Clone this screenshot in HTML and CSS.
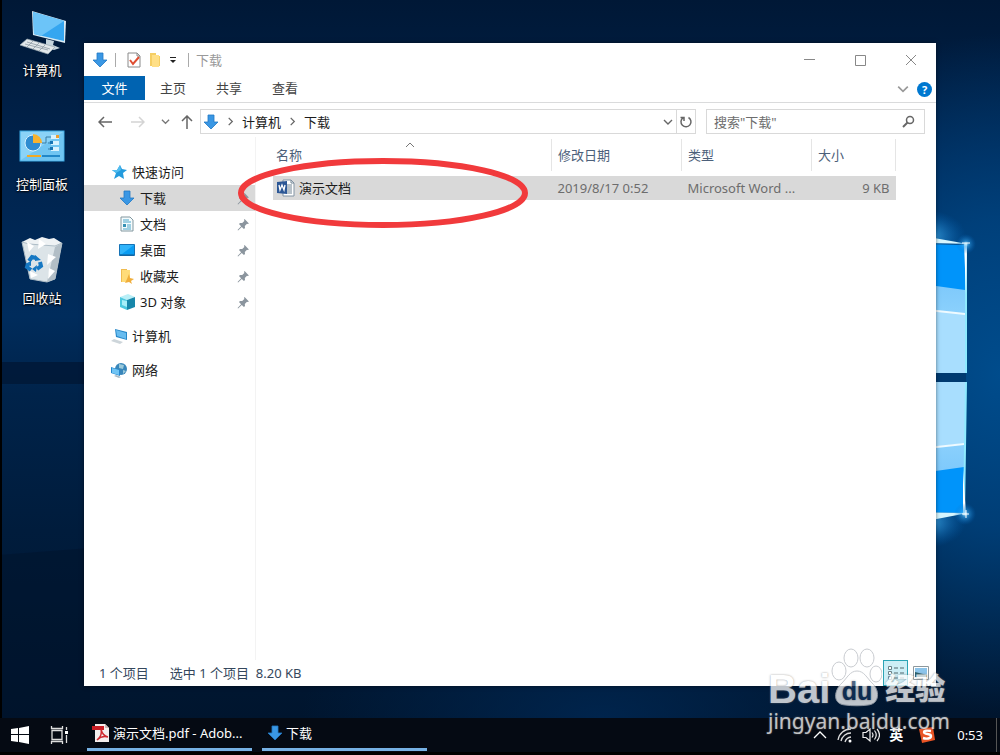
FILE: index.html
```html
<!DOCTYPE html>
<html lang="zh-CN">
<head>
    <meta charset="UTF-8">
    <meta name="viewport" content="width=device-width, initial-scale=1.0">
    <title>下载</title>
    <link rel="stylesheet" href="styles.css">
</head>
<body>
    <!-- Shared icons -->
    <svg class="sprite" aria-hidden="true">
        <symbol id="i-down" viewBox="0 0 16 16"><path d="M5 1h6v7h4l-7 7-7-7h4z" fill="#3a97e4" stroke="#2279c4" stroke-width=".8"/></symbol>
        <symbol id="i-pin" viewBox="0 0 12 12"><path d="M7 1l4 4-1 .6-.8-.3-2 2 .2 2-1 .9-2-2L1 11.500l-.5-.5 3.300-3.400L1.800 5.600l1-1 2 .1 2-2L6.500 1.700z" fill="#8b959e"/></symbol>
        <symbol id="i-chev" viewBox="0 0 10 10"><path d="M1 3l4 4 4-4" fill="none" stroke="currentColor" stroke-width="1.400"/></symbol>
        <symbol id="i-right" viewBox="0 0 10 10"><path d="M3 1l4 4-4 4" fill="none" stroke="currentColor" stroke-width="1.400"/></symbol>
    </svg>

    <main class="desktop">
        <svg class="wallpaper" viewBox="0 0 1000 755" preserveAspectRatio="xMaxYMin slice" aria-hidden="true">
            <defs>
                <radialGradient id="glow"><stop offset="0" stop-color="#c8f2ff"/><stop offset=".3" stop-color="#3aa8ee" stop-opacity=".6"/><stop offset="1" stop-color="#0067c0" stop-opacity="0"/></radialGradient>
                <linearGradient id="paneTop" x1="0" y1="0" x2="0" y2="1"><stop offset="0" stop-color="#7cc8fb"/><stop offset="1" stop-color="#a6e0ff"/></linearGradient>
                <linearGradient id="paneBottom" x1="0" y1="0" x2="0" y2="1"><stop offset="0" stop-color="#a6e0ff"/><stop offset="1" stop-color="#7cc8fb"/></linearGradient>
            </defs>
            <path d="M0 362h90v22H0z" fill="#001836" opacity=".8"/>
            <path d="M0 555l90-7v170H0z" fill="#001128" opacity=".4"/>
            <ellipse cx="926" cy="236" rx="40" ry="26" fill="url(#glow)"/>
            <ellipse cx="926" cy="522" rx="40" ry="26" fill="url(#glow)"/>
            <path d="M900 244l66 1v128h-66z" fill="#0094fa"/>
            <path d="M900 281l65 9v83h-65z" fill="url(#paneTop)"/>
            <path d="M900 306l65 8v59h-65z" fill="#a8defe"/>
            <path d="M900 307l65 7" stroke="#eefaff" stroke-width="2"/>
            <path d="M900 373h66v9h-66z" fill="#003a70"/>
            <path d="M900 382h66l-2 131-64-1z" fill="#0094fa"/>
            <path d="M900 382h66l-2 85-64 9z" fill="url(#paneBottom)"/>
            <path d="M900 382h65v61l-65 8z" fill="#a8defe"/>
            <path d="M900 451l64-7" stroke="#eefaff" stroke-width="2"/>
            <path d="M900 232l68 12-68-2z" fill="#d6f6ff"/>
            <path d="M900 512l68 1-68 13z" fill="#d6f6ff"/>
            <path d="M966 243v130M966 382l-2 132" fill="none" stroke="#8eeaff" stroke-width="2"/>
            <path d="M964 243l3 1-1 50zM963 470l3 44-3 1z" fill="#fff"/>
            <circle cx="966" cy="244" r="10" fill="url(#glow)"/>
            <circle cx="965" cy="514" r="11" fill="url(#glow)"/>
            <path d="M962 243h8M962 514h7M966 510v8" stroke="#fff"/>
        </svg>

        <nav class="shortcuts" aria-label="桌面">
            <a class="shortcut" href="#">
                <svg width="48" height="48" viewBox="0 0 48 48">
                    <path d="M14 2l34 10-1 22-32-8z" fill="#d9eaf3"/>
                    <path d="M15 3l31 9v20l-30-7z" fill="#35a6f0"/>
                    <path d="M15 3l31 9-23 15-7-2z" fill="#6cc4f8"/>
                    <path d="M28 30l8 2-1 4 7 3-6 2-13-4 5-2z" fill="#c6d5dd"/>
                    <path d="M9 30l28 8-7 7L2 36z" fill="#e3e8ea" stroke="#9ba9b2" stroke-width=".7"/>
                    <path d="M9 33l23 7M7 35l23 6M15 32l-6 6M21 34l-6 6M27 36l-6 6" stroke="#8e9ba3" stroke-width=".8"/>
                </svg>
                <span>计算机</span>
            </a>
            <a class="shortcut" href="#">
                <svg width="48" height="48" viewBox="0 0 48 48">
                    <rect x="2" y="8" width="44" height="30" fill="#8bd3f7" stroke="#38a7e2"/>
                    <path d="M3 37L45 9v28z" fill="#70c5f2"/>
                    <circle cx="15" cy="20" r="8" fill="#2e8bd0" stroke="#d8f2ff"/>
                    <path d="M15 20v-9a9 9 0 0 1 9 9z" fill="#f7b22d"/>
                    <path d="M24 20h4v-6h5M33 20h-3M33 26h-3" fill="none" stroke="#377ca5"/>
                    <path d="M33 12h8v4h-8zM33 18h8v4h-8zM33 24h8v4h-8z" fill="#d7f2ff"/>
                    <path d="M38 12h3v3h-3z" fill="#ee9e2f"/>
                    <path d="M32 18h3v3h-3zM32 24h3v3h-3z" fill="#1674b5"/>
                    <path d="M9 33h14" stroke="#f2aa25" stroke-width="2"/>
                    <path d="M24 33h18" stroke="#2187c8" stroke-width="2"/>
                </svg>
                <span>控制面板</span>
            </a>
            <a class="shortcut" href="#">
                <svg width="48" height="48" viewBox="0 0 48 48">
                    <path d="M4 5l8-4 5 2 7-3 7 2 5-1 8 5-7 6-27-2z" fill="#eef2f4"/>
                    <path d="M4 5l7 2 26 2 7-3-7 36-8 3-17-3z" fill="#dce4e8" stroke="#aebdc7"/>
                    <path d="M37 10l7-4-7 36-8 3z" fill="#b2bec6"/>
                    <path d="M9 5l7 4-5 6zM21 2l7 5-8 5zM30 17l8 3-9 8zM31 31l6 3-7 8zM12 34l8 4-7 3z" fill="#fff"/>
                    <g fill="none" stroke="#1678c3" stroke-width="4"><path d="M11 24l3-4 4 1M22 25l1 4-4 3M13 33l-4-3 1-3"/></g>
                    <path d="M17 18l6 5-6 1zM19 28l-1 7-4-3zM7 27l6-3v5z" fill="#1678c3"/>
                </svg>
                <span>回收站</span>
            </a>
        </nav>

        <section class="window">
            <header class="titlebar">
                <svg width="16" height="16"><use href="#i-down"/></svg>
                <i class="divider"></i>
                <button class="plain" aria-label="属性"><svg width="14" height="16" viewBox="0 0 14 16"><path d="M1 1h9l3 3v11H1z" fill="#fff" stroke="#8a8a8a"/><path d="M10 1v3h3" fill="none" stroke="#8a8a8a"/><path d="M3 8l3 4 6-7" fill="none" stroke="#df4d31" stroke-width="2"/></svg></button>
                <button class="plain" aria-label="新建文件夹"><svg width="12" height="14" viewBox="0 0 12 14"><path d="M1 0h6v3h4v10H1z" fill="#f5ce64"/><path d="M3 2h7v12H3z" fill="#ffdf86"/></svg></button>
                <button class="plain" aria-label="自定义"><svg width="8" height="8" viewBox="0 0 8 8"><path d="M1 1.500h6" stroke="#222"/><path d="M1 4h6L4 7z" fill="#222"/></svg></button>
                <i class="divider"></i>
                <span class="title">下载</span>
                <div class="controls">
                    <button class="plain" aria-label="最小化"><svg width="12" height="12"><path d="M1 5.500h11" stroke="#888"/></svg></button>
                    <button class="plain" aria-label="最大化"><svg width="12" height="12"><path d="M1.500 1.500h10v10h-10z" fill="none" stroke="#888"/></svg></button>
                    <button class="plain" aria-label="关闭"><svg width="12" height="12"><path d="M1 1l10 10M11 1L1 11" stroke="#888"/></svg></button>
                </div>
            </header>

            <div class="ribbon">
                <button class="tab active">文件</button>
                <button class="tab">主页</button>
                <button class="tab">共享</button>
                <button class="tab">查看</button>
                <button class="plain expand" aria-label="展开功能区"><svg width="12" height="12"><use href="#i-chev"/></svg></button>
                <button class="help" aria-label="帮助">?</button>
            </div>

            <div class="addressbar">
                <div class="history">
                    <button class="plain" aria-label="后退"><svg width="14" height="12" viewBox="0 0 14 12"><path d="M6 1L1 6l5 5M1 6h13" fill="none" stroke="#666" stroke-width="1.500"/></svg></button>
                    <button class="plain" aria-label="前进"><svg width="14" height="12" viewBox="0 0 14 12"><path d="M8 1l5 5-5 5M13 6H0" fill="none" stroke="#d4d4d4" stroke-width="1.500"/></svg></button>
                    <button class="plain narrow" aria-label="最近位置"><svg width="9" height="9"><use href="#i-chev"/></svg></button>
                    <button class="plain narrow" aria-label="上移"><svg width="12" height="14" viewBox="0 0 12 14"><path d="M1 6l5-5 5 5M6 1v13" fill="none" stroke="#666" stroke-width="1.500"/></svg></button>
                </div>
                <div class="path">
                    <svg width="16" height="16"><use href="#i-down"/></svg>
                    <svg width="9" height="9"><use href="#i-right"/></svg>
                    <a href="#">计算机</a>
                    <svg width="9" height="9"><use href="#i-right"/></svg>
                    <a href="#">下载</a>
                    <button class="plain drop" aria-label="历史记录"><svg width="10" height="10"><use href="#i-chev"/></svg></button>
                    <button class="plain refresh" aria-label="刷新"><svg width="14" height="14" viewBox="0 0 14 14"><path d="M9.500 2.500a5 5 0 1 1-5.500.3M1.500 2.500h3.500v3.500" fill="none" stroke="#666" stroke-width="1.500"/></svg></button>
                </div>
                <label class="search">
                    <input type="text" placeholder='搜索"下载"' aria-label="搜索">
                    <svg width="13" height="13" viewBox="0 0 13 13"><circle cx="8" cy="5" r="3.500" fill="none" stroke="#666" stroke-width="1.500"/><path d="M5.500 7.500L1 12" stroke="#666" stroke-width="2"/></svg>
                </label>
            </div>

            <div class="content">
                <nav class="sidebar" aria-label="导航窗格">
                    <div class="group">
                        <a class="node" href="#"><svg width="16" height="16" viewBox="0 0 16 16"><path d="M9 1l2 4 5 1-4 3 1 6-5-3-5 3 2-6-4-3h5z" fill="#239bdd"/><path d="M9 1l1 5-5 3-4-3h5z" fill="#52bdf0"/></svg><span>快速访问</span></a>
                        <a class="node child selected" href="#"><svg width="16" height="16"><use href="#i-down"/></svg><span>下载</span><svg class="pin" width="13" height="13"><use href="#i-pin"/></svg></a>
                        <a class="node child" href="#"><svg width="16" height="16" viewBox="0 0 16 16"><path d="M2 1h9l3 3v11H2z" fill="#f4fbfd" stroke="#82979f"/><path d="M4 4h6M4 6h8M8 9h4M8 11h4M4 13h8" stroke="#4aa5c9"/><path d="M4 8h3v3H4z" fill="#3591b5"/></svg><span>文档</span><svg class="pin" width="13" height="13"><use href="#i-pin"/></svg></a>
                        <a class="node child" href="#"><svg width="16" height="16" viewBox="0 0 16 16"><path d="M.5 2.500h15v11H.5z" fill="#0a9cf2" stroke="#1673b6"/><path d="M1 3h14L3 12H1z" fill="#31b4fa"/><path d="M1 13h14" stroke="#135b91"/></svg><span>桌面</span><svg class="pin" width="13" height="13"><use href="#i-pin"/></svg></a>
                        <a class="node child" href="#"><svg width="16" height="16" viewBox="0 0 16 16"><path d="M2 1h6v2h3v11H2z" fill="#f0bc50"/><path d="M3 2h8v12H3z" fill="#ffdc79"/><path d="M10 6l1 4 4 1-3 2 1 3-3-2-4 1 2-4z" fill="#f0ae3b"/></svg><span>收藏夹</span><svg class="pin" width="13" height="13"><use href="#i-pin"/></svg></a>
                        <a class="node child" href="#"><svg width="16" height="16" viewBox="0 0 16 16"><path d="M1 3l8-3 7 3-8 3z" fill="#b9eff7"/><path d="M1 3l7 3v10l-7-3z" fill="#4cc9df"/><path d="M8 6l8-3v10l-8 3z" fill="#1787aa"/><path d="M3 6l5 1v6l-5-2z" fill="#a7eff8"/></svg><span>3D 对象</span><svg class="pin" width="13" height="13"><use href="#i-pin"/></svg></a>
                    </div>
                    <div class="group">
                        <a class="node" href="#"><svg width="16" height="16" viewBox="0 0 16 16"><path d="M4 1l12 3v8L5 9z" fill="#2687c8"/><path d="M5 2l10 3v6L6 8z" fill="#68bcef"/><path d="M3 11l9 3-3 2-9-3z" fill="#cdd5da"/></svg><span>计算机</span></a>
                    </div>
                    <div class="group">
                        <a class="node" href="#"><svg width="16" height="16" viewBox="0 0 16 16"><circle cx="10" cy="7" r="6" fill="#3886ba"/><path d="M8 2l5 1-1 4-4-1zM12 8l3 1-3 3z" fill="#9bc9da"/><path d="M0 5l9 3v6l-9-3z" fill="#2487ce"/><path d="M1 6l7 2v5l-7-2z" fill="#70c4f4"/><path d="M5 13l5 2-2 1-5-2z" fill="#a8bac5"/></svg><span>网络</span></a>
                    </div>
                </nav>

                <div class="files">
                    <table>
                        <thead>
                            <tr>
                                <th class="name">名称<svg class="sort" width="10" height="6" viewBox="0 0 10 6"><path d="M1 5l4-4 4 4" fill="none" stroke="#777"/></svg></th>
                                <th class="date">修改日期</th>
                                <th class="type">类型</th>
                                <th class="size">大小</th>
                            </tr>
                        </thead>
                        <tbody>
                            <tr>
                                <td><a class="file" href="#"><svg width="18" height="18" viewBox="0 0 18 18"><path d="M6 1h8l3 3v13H6z" fill="#fff" stroke="#8495a5"/><path d="M14 1v3h3M10 6h5M10 8h5M10 10h5M10 12h5M10 14h5" fill="none" stroke="#718494"/><path d="M0 3l10-1v13L0 14z" fill="#2c5796"/><path d="M2 6l1 5 2-5 2 5 1-5" fill="none" stroke="#fff" stroke-width="1.300"/></svg>演示文档</a></td>
                                <td>2019/8/17 0:52</td>
                                <td>Microsoft Word ...</td>
                                <td class="amount">9 KB</td>
                            </tr>
                        </tbody>
                    </table>
                    <svg class="highlight" width="292" height="72" viewBox="0 0 292 72" aria-hidden="true"><ellipse cx="146" cy="36" rx="142" ry="32" fill="none" stroke="#f13a3c" stroke-width="6"/></svg>
                </div>
            </div>

            <footer class="statusbar">
                <span>1 个项目</span>
                <span>选中 1 个项目&nbsp; 8.20 KB</span>
                <div class="views">
                    <button class="view current" aria-label="详细信息"><svg width="16" height="14" viewBox="0 0 16 14"><path d="M.5.500h3v3h-3zM.5 5.500h3v3h-3zM.5 10.500h3v3h-3z" fill="#fff" stroke="#68828a"/><path d="M6 2h4M12 2h4M6 7h4M12 7h4M6 12h4M12 12h4" stroke="#51666d"/></svg></button>
                    <button class="view" aria-label="大图标"><svg width="16" height="14" viewBox="0 0 16 14"><path d="M.5.500h15v13H.5z" fill="#fff" stroke="#8d989d"/><path d="M2 2h12v9H2z" fill="#8cc4ea"/><path d="M2 6l4 1 8 2v2H2z" fill="#295c67"/></svg></button>
                </div>
            </footer>
        </section>
    </main>

    <footer class="taskbar">
        <button class="start" aria-label="开始"><svg width="18" height="18" viewBox="0 0 18 18"><path d="M0 3l7-1v6H0zM8 2l10-2v8H8zM0 9h7v7l-7-1zM8 9h10v9L8 16z" fill="#fff"/></svg></button>
        <button class="start" aria-label="任务视图"><svg width="20" height="18" viewBox="0 0 20 18"><path d="M2 4.500h10v9H2zM1.500 0v2.500h11V0M1.500 18v-2.500h11V18M16.500 1v3M16.500 9v8" fill="none" stroke="#ddd" stroke-width="1.300"/><path d="M15 5h3v3h-3z" fill="#fff"/></svg></button>
        <div class="tasks">
            <button class="task"><svg width="18" height="18" viewBox="0 0 18 18"><path d="M3 0h10l4 4v14H3z" fill="#f4eeee"/><path d="M13 0v4h4" fill="#c9b7b7"/><path d="M0 2h12v4H0z" fill="#c91d25"/><path d="M9 5c1 5 3 7 7 8-4-1-8 0-11 3 4-3 5-7 4-11z" fill="none" stroke="#cf2930" stroke-width="1.500"/></svg><span>演示文档.pdf - Adob...</span></button>
            <button class="task"><svg width="16" height="16"><use href="#i-down"/></svg><span>下载</span></button>
        </div>
        <div class="tray">
            <button aria-label="显示隐藏的图标"><svg width="16" height="16" viewBox="0 0 16 16"><path d="M2 11l6-6 6 6" fill="none" stroke="#fff" stroke-width="1.300"/></svg></button>
            <button aria-label="网络"><svg width="16" height="16" viewBox="0 0 16 16"><path d="M1 13A13 13 0 0 1 14 2M4 14A10 10 0 0 1 14 6M8 15a7 7 0 0 1 6-5" fill="none" stroke="#ddd" stroke-width="1.300"/><circle cx="13" cy="14" r="1.500" fill="#fff"/></svg></button>
            <button aria-label="音量"><svg width="18" height="16" viewBox="0 0 18 16"><path d="M1 5.500h3l4-3.500v12L4 10.500H1zM10 5.500q2 2.500 0 5M12.500 3.500q3.500 4.500 0 9M15 2q5 6 0 12" fill="none" stroke="#eee" stroke-width="1.200"/></svg></button>
            <button class="ime">英</button>
            <button class="sogou" aria-label="搜狗输入法"><svg width="18" height="18" viewBox="0 0 18 18"><path d="M1 3l14-2 2 13-13 3z" fill="#e95425"/><path d="M13 5q-7-1-7 1c0 3 7 1 7 4 0 3-5 3-8 2" fill="none" stroke="#fff" stroke-width="2.400"/></svg></button>
            <time>0:53</time>
            <i class="peek"></i>
        </div>
    </footer>

    <div class="watermark">
        <div class="brand">
            <span>Bai</span>
            <svg width="52" height="60" viewBox="0 0 52 60"><g fill="#fff" stroke="#b8bcc2"><ellipse cx="9" cy="24" rx="7" ry="9"/><ellipse cx="21" cy="11" rx="7" ry="9"/><ellipse cx="37" cy="11" rx="7" ry="9"/><ellipse cx="46" cy="27" rx="6" ry="8"/><path d="M27 24c7 0 10 7 15 12 8 7 8 21-4 22-6 1-16 1-23 0C2 57 4 43 12 36c5-5 8-12 15-12z"/></g><text class="paw-text" x="27" y="53" text-anchor="middle">du</text></svg>
            <span class="cn">经验</span>
        </div>
        <div class="site">jingyan.baidu.com</div>
    </div>
</body>
</html>
```
FILE: styles.css
```css
* {
    margin: 0;
    padding: 0;
    box-sizing: border-box;
}

body {
    font-family: "Noto Sans", "Noto Sans CJK SC", sans-serif;
    font-size: 13px;
    line-height: 20px;
    color: #1c1c1c;
    background: #000;
    min-height: 100vh;
    display: flex;
    flex-direction: column;
    position: relative;
    overflow: hidden;
}

a {
    color: inherit;
    text-decoration: none;
}

button {
    font: inherit;
    color: inherit;
    background: none;
    border: none;
}

svg {
    flex: none;
    display: block;
}

.sprite {
    position: absolute;
    width: 0;
    height: 0;
}

/* Desktop */
.desktop {
    flex: 1;
    position: relative;
    margin-left: 2px;
    padding: 9px 2px;
    background:
        radial-gradient(ellipse 240px 340px at 100% 52%, #004c8c 0%, rgba(0, 70, 132, 0.8) 45%, rgba(0, 40, 85, 0) 100%),
        radial-gradient(ellipse 300px 140px at 60% 100%, rgba(0, 40, 84, 0.8), rgba(0, 40, 84, 0)),
        linear-gradient(180deg, #001836 0%, #00234d 22%, #002c5c 44%, #00234a 55%, #001c3c 74%, #00152e 100%);
}

.wallpaper {
    position: absolute;
    inset: 0;
    width: 100%;
    height: 755px;
}

.shortcuts {
    position: relative;
    width: 76px;
    display: flex;
    flex-direction: column;
    gap: 43px;
}

.shortcut {
    display: flex;
    flex-direction: column;
    align-items: center;
    gap: 3px;
    color: #fff;
    text-shadow: 0 1px 2px #000, 0 0 2px #000;
}

/* Explorer window */
.window {
    position: absolute;
    top: 43px;
    right: 64px;
    bottom: 32px;
    left: 82px;
    background: #fff;
    display: flex;
    flex-direction: column;
    box-shadow: 0 0 4px rgba(0, 0, 0, 0.5);
}

.plain {
    display: flex;
    align-items: center;
    justify-content: center;
}

.titlebar {
    height: 33px;
    display: flex;
    align-items: center;
    gap: 7px;
    padding-left: 8px;
}

.divider {
    width: 1px;
    height: 14px;
    background: #aaa;
}

.titlebar .divider + .plain {
    margin-left: 4px;
}

.titlebar .plain + .plain {
    margin-left: 1px;
}

.titlebar .plain + .divider {
    margin-left: 4px;
}

.title {
    color: #999;
}

.controls {
    margin-left: auto;
    display: flex;
}

.controls .plain {
    width: 51px;
    height: 32px;
}

.controls .plain + .plain {
    margin-left: 0;
}

.ribbon {
    display: flex;
    align-items: center;
    height: 27px;
    padding-right: 4px;
    border-bottom: 1px solid #dadbdc;
}

.tab {
    width: 56px;
    height: 24px;
    align-self: flex-start;
    color: #444;
}

.tab.active {
    width: 61px;
    background: #0063b1;
    color: #fff;
}

.expand {
    margin-left: auto;
    margin-right: 8px;
    color: #999;
}

.help {
    width: 15px;
    height: 15px;
    border-radius: 50%;
    background: #0078d0;
    color: #fff;
    font-size: 11px;
    font-weight: 700;
    line-height: 15px;
}

.addressbar {
    display: flex;
    gap: 10px;
    padding: 6px 11px 3px 4px;
}

.history {
    display: flex;
    color: #777;
}

.history .plain {
    width: 33px;
}

.history .narrow {
    width: 22px;
}

.addressbar .history {
    margin-right: -8px;
}

.path,
.search {
    height: 25px;
    border: 1px solid #d9d9d9;
    display: flex;
    align-items: center;
}

.path {
    flex: 1;
    gap: 7px;
    padding-left: 2px;
    color: #666;
}

.path a {
    color: #1c1c1c;
}

.drop {
    margin-left: auto;
}

.refresh {
    width: 19px;
    height: 23px;
    margin-left: -4px;
    border-left: 1px solid #d9d9d9;
}

.search {
    width: 219px;
    padding: 0 9px 0 7px;
}

.search input {
    flex: 1;
    min-width: 0;
    border: none;
    outline: none;
    font: inherit;
}

.search input::placeholder {
    color: #6d6d6d;
}

.content {
    flex: 1;
    display: flex;
}

.sidebar {
    width: 172px;
    padding-top: 22px;
    display: flex;
    flex-direction: column;
    gap: 8px;
    border-right: 1px solid #f3f3f3;
}

.node {
    height: 26px;
    display: flex;
    align-items: center;
    gap: 5px;
    padding: 0 5px 0 27px;
}

.node.child {
    padding-left: 35px;
}

.node.selected {
    background: #d9d9d9;
}

.pin {
    margin-left: auto;
}

.files {
    flex: 1;
    position: relative;
    padding: 2px 40px 0 17px;
}

table {
    width: 100%;
    table-layout: fixed;
    border-collapse: collapse;
}

th {
    height: 32px;
    font-weight: 400;
    text-align: left;
    padding-left: 6px;
    color: #4c607a;
    border-right: 1px solid #e5e5e5;
    position: relative;
}

th.name {
    padding-left: 3px;
}

.sort {
    position: absolute;
    top: 3px;
    left: 132px;
}

.date,
.type {
    width: 130px;
}

.size {
    width: 84px;
}

tbody::before {
    content: "";
    display: block;
    height: 5px;
}

td {
    height: 24px;
    padding: 0 6px;
    background: #d9d9d9;
    color: #6d6d6d;
    white-space: nowrap;
}

td:first-child {
    padding-left: 4px;
}

.file {
    display: flex;
    align-items: center;
    gap: 4px;
    color: #1c1c1c;
}

.amount {
    text-align: right;
}

.highlight {
    position: absolute;
    top: 20px;
    left: -19px;
}

.statusbar {
    height: 26px;
    display: flex;
    align-items: center;
    gap: 21px;
    padding: 0 3px 0 15px;
    color: #34475c;
}

.views {
    margin-left: auto;
    align-self: flex-end;
    display: flex;
}

.view {
    width: 25px;
    height: 26px;
    display: flex;
    align-items: center;
    justify-content: center;
}

.view.current {
    background: #cceef6;
    border: 1px solid #2aa3b5;
}

/* Taskbar */
.taskbar {
    height: 37px;
    border-bottom: 3px solid #000;
    background: #050a13;
    color: #fff;
    display: flex;
}

.start {
    width: 40px;
    display: flex;
    align-items: center;
    justify-content: center;
}

.tasks {
    display: flex;
    gap: 10px;
    margin-left: 7px;
}

.task {
    width: 165px;
    height: 33px;
    padding: 0 5px;
    border-bottom: 3px solid #76b1e4;
    display: flex;
    align-items: center;
    gap: 3px;
    white-space: nowrap;
}

.tray {
    margin-left: auto;
    display: flex;
    align-items: center;
    gap: 9px;
}

.ime {
    font-size: 14px;
    font-weight: 700;
}

.sogou {
    margin: 0 12px 0 6px;
}

.tray time {
    margin-right: 4px;
}

.peek {
    width: 4px;
    align-self: stretch;
    border-left: 1px solid #555;
}

/* Watermark over the lower right corner */
.watermark {
    position: absolute;
    right: 52px;
    bottom: 20px;
    width: 180px;
    opacity: 0.75;
    color: #fff;
    text-shadow: 0 0 2px #777;
    pointer-events: none;
}

.brand {
    display: flex;
    align-items: flex-end;
    height: 60px;
    font-family: "Liberation Sans", "Noto Sans CJK SC", sans-serif;
    font-size: 40px;
    font-weight: 700;
    line-height: 36px;
}

.brand .cn {
    font-size: 30px;
    font-weight: 900;
    margin-left: 3px;
}

.paw-text {
    font-size: 25px;
    fill: #12335c;
}

.site {
    font-size: 21px;
    line-height: 28px;
}
```
